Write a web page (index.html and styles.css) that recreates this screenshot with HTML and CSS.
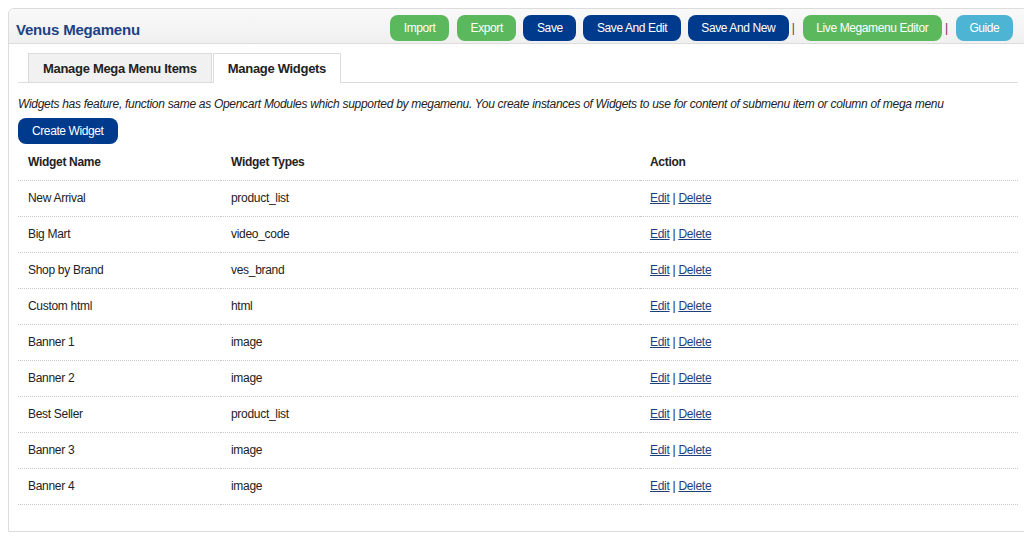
FILE: index.html
```html
<!DOCTYPE html>
<html>
<head>
<meta charset="utf-8">
<link rel="stylesheet" href="styles.css">
</head>
<body>
<div class="panel">
  <div class="panel-head">
    <h1 class="title">Venus Megamenu</h1>
    <div class="actions">
      <a class="btn green">Import</a>
      <a class="btn green">Export</a>
      <a class="btn blue">Save</a>
      <a class="btn blue">Save And Edit</a>
      <a class="btn blue">Save And New</a>
      <span class="sep">|</span>
      <a class="btn green">Live Megamenu Editor</a>
      <span class="sep">|</span>
      <a class="btn cyan">Guide</a>
    </div>
  </div>
  <div class="panel-body">
    <ul class="tabs">
      <li class="tab">Manage Mega Menu Items</li>
      <li class="tab active">Manage Widgets</li>
    </ul>
    <p class="desc">Widgets has feature, function same as Opencart Modules which supported by megamenu. You create instances of Widgets to use for content of submenu item or column of mega menu</p>
    <a class="btn blue create">Create Widget</a>
    <table class="list">
      <thead>
        <tr><th class="c1">Widget Name</th><th class="c2">Widget Types</th><th>Action</th></tr>
      </thead>
      <tbody>
        <tr><td>New Arrival</td><td>product_list</td><td><a class="lnk">Edit</a> | <a class="lnk">Delete</a></td></tr>
        <tr><td>Big Mart</td><td>video_code</td><td><a class="lnk">Edit</a> | <a class="lnk">Delete</a></td></tr>
        <tr><td>Shop by Brand</td><td>ves_brand</td><td><a class="lnk">Edit</a> | <a class="lnk">Delete</a></td></tr>
        <tr><td>Custom html</td><td>html</td><td><a class="lnk">Edit</a> | <a class="lnk">Delete</a></td></tr>
        <tr><td>Banner 1</td><td>image</td><td><a class="lnk">Edit</a> | <a class="lnk">Delete</a></td></tr>
        <tr><td>Banner 2</td><td>image</td><td><a class="lnk">Edit</a> | <a class="lnk">Delete</a></td></tr>
        <tr><td>Best Seller</td><td>product_list</td><td><a class="lnk">Edit</a> | <a class="lnk">Delete</a></td></tr>
        <tr><td>Banner 3</td><td>image</td><td><a class="lnk">Edit</a> | <a class="lnk">Delete</a></td></tr>
        <tr><td>Banner 4</td><td>image</td><td><a class="lnk">Edit</a> | <a class="lnk">Delete</a></td></tr>
      </tbody>
    </table>
  </div>
</div>
</body>
</html>
```

FILE: styles.css
```css
html, body {
  margin: 0;
  padding: 0;
  background: #fff;
}
body {
  padding: 8px 0 0 8px;
  font-family: "Liberation Sans", Arial, sans-serif;
  font-size: 12px;
  letter-spacing: -0.3px;
  color: #222;
  overflow: hidden;
}
.panel {
  border: 1px solid #dcdcdc;
  border-radius: 6px 6px 0 0;
  box-sizing: border-box;
  width: 1020px;
}
.panel-head {
  display: flex;
  align-items: center;
  justify-content: space-between;
  height: 34px;
  background: linear-gradient(#f9f9f9, #f0f0f0);
  border-bottom: 1px solid #dcdcdc;
  border-radius: 6px 6px 0 0;
  padding: 0 0 0 7px;
}
.title {
  margin: 0;
  font-size: 15px;
  letter-spacing: -0.2px;
  font-weight: bold;
  color: #1c4285;
  padding-top: 6px;
}
.actions {
  display: flex;
  align-items: center;
  margin-right: 14px;
  padding-top: 4px;
}
.btn {
  display: inline-block;
  height: 26px;
  line-height: 26px;
  padding: 0 13.6px;
  border-radius: 8px;
  color: #fff;
  font-size: 12px;
  letter-spacing: -0.4px;
  margin-left: 7px;
  box-sizing: border-box;
}
.actions .btn:first-child { margin-left: 0; }
.actions .btn:nth-child(2) { margin-left: 8px; }
.green { background: #5cb85c; }
.blue { background: #003a8c; }
.cyan { background: #4eb4d3; }
.sep {
  color: #7b2a5a;
  margin: 0 0 0 3px;
  font-size: 12px;
}
.sep + .btn { margin-left: 8px; }
.panel-body {
  padding: 9px 9px 26px 9px;
}
.tabs {
  list-style: none;
  margin: 0;
  padding: 0 0 0 10px;
  display: flex;
  border-bottom: 1px solid #dcdcdc;
}
.tab {
  height: 28px;
  line-height: 30px;
  padding: 0 14px;
  font-size: 13px;
  font-weight: bold;
  color: #222;
  background: #f1f1f1;
  border: 1px solid #dcdcdc;
  border-bottom: none;
  margin-right: 1px;
}
.tab.active {
  background: #fff;
  margin-bottom: -1px;
  height: 29px;
}
.desc {
  margin: 14px 0 7px 0;
  font-style: italic;
  font-size: 12px;
  color: #222;
}
.create {
  margin-left: 0;
  padding: 0 14px;
}
.list {
  width: 100%;
  border-collapse: collapse;
  margin: 0;
}
.list th, .list td {
  text-align: left;
  padding: 0 10px;
  border-bottom: 1px dotted #c8c8c8;
  font-size: 12px;
  box-sizing: border-box;
}
.list td {
  height: 36px;
  color: #222;
}
.list th {
  font-weight: bold;
  color: #222;
  height: 36px;
}
.c1 { width: 203px; }
.c2 { width: 419px; }
.lnk {
  color: #1f3f7a;
  text-decoration: underline;
}
```
